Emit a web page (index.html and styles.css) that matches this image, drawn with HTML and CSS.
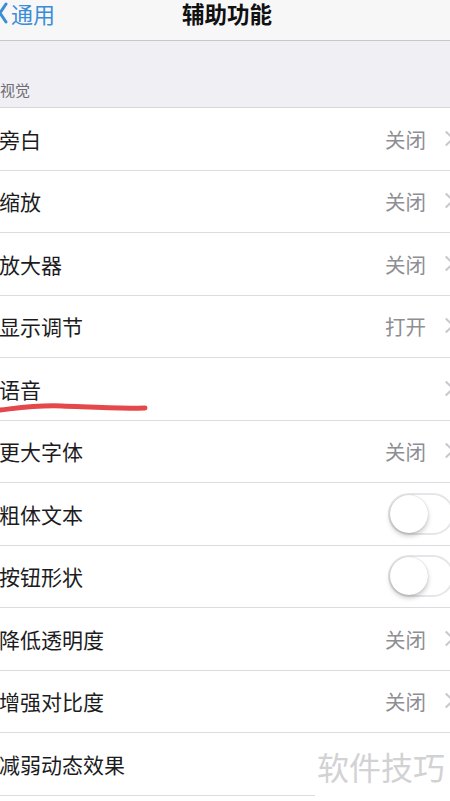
FILE: index.html
```html
<!DOCTYPE html>
<html lang="zh-CN">
<head>
    <meta charset="UTF-8">
    <meta name="viewport" content="width=device-width, initial-scale=1.0">
    <title>辅助功能</title>
    <link rel="stylesheet" href="styles.css">
</head>
<body>
    <div class="screen">
        <header class="nav">
            <span class="back">
                <svg class="back-icon" width="9" height="22" viewBox="0 0 9 22">
                    <path d="M7 2 L1 11 L7 20" fill="none" stroke="#3b8ed6" stroke-width="3" stroke-linecap="round" stroke-linejoin="round"/>
                </svg>
                通用
            </span>
            <h1>辅助功能</h1>
        </header>

        <div class="section-title">视觉</div>

        <ul class="list">
            <li class="row"><span class="label">旁白</span><span class="value">关闭</span><span class="chev"></span></li>
            <li class="row"><span class="label">缩放</span><span class="value">关闭</span><span class="chev"></span></li>
            <li class="row"><span class="label">放大器</span><span class="value">关闭</span><span class="chev"></span></li>
            <li class="row"><span class="label">显示调节</span><span class="value">打开</span><span class="chev"></span></li>
            <li class="row"><span class="label">语音</span><span class="chev"></span></li>
            <li class="row"><span class="label">更大字体</span><span class="value">关闭</span><span class="chev"></span></li>
            <li class="row"><span class="label">粗体文本</span><span class="toggle"><span class="knob"></span></span></li>
            <li class="row"><span class="label">按钮形状</span><span class="toggle"><span class="knob"></span></span></li>
            <li class="row"><span class="label">降低透明度</span><span class="value">关闭</span><span class="chev"></span></li>
            <li class="row"><span class="label">增强对比度</span><span class="value">关闭</span><span class="chev"></span></li>
            <li class="row"><span class="label">减弱动态效果</span></li>
        </ul>

        <!-- hand drawn mark under 语音 -->
        <svg class="scribble" width="150" height="14" viewBox="0 0 150 14">
            <path d="M0 9 C18 7 35 4 62 5 S115 8 145 7" fill="none" stroke="#e5484b" stroke-width="5" stroke-linecap="round"/>
        </svg>

        <div class="watermark">软件技巧</div>
    </div>
</body>
</html>
```

FILE: styles.css
```css
html,
body {
    margin: 0;
    padding: 0;
    overflow: hidden;
    background-color: #fff;
}

body {
    font-family: "Noto Sans CJK SC", "Noto Sans", sans-serif;
    color: #1c1c1e;
}

.screen {
    position: relative;
    width: 454px;
    height: 801px;
    margin-left: -1px;
    overflow: hidden;
}

.nav {
    height: 40px;
    border-bottom: 1px solid #c8c8cc;
    background-color: #f7f7f8;
    position: relative;
    display: flex;
    justify-content: center;
}

.back {
    position: absolute;
    left: 0;
    top: 0;
    display: flex;
    align-items: center;
    gap: 3px;
    height: 26px;
    line-height: 26px;
    font-size: 22px;
    color: #3b8ed6;
}

.back-icon {
    display: block;
}

.nav h1 {
    margin: 0;
    font-size: 22.5px;
    font-weight: 700;
    line-height: 26px;
    color: #111;
    padding-left: 2px;
}

.section-title {
    background-color: #efeff4;
    border-bottom: 1px solid #d8d8dc;
    box-sizing: border-box;
    height: 67px;
    padding-top: 38px;
    padding-left: 1px;
    font-size: 15px;
    color: #6d6d72;
}

.list {
    list-style: none;
    margin: 0;
    padding: 0;
}

.row {
    height: 61.5px;
    border-bottom: 1px solid #dcdcdf;
    display: flex;
    align-items: center;
    font-size: 21px;
}

.label {
    flex: 1;
    color: #1c1c1e;
}

.value {
    color: #8e8e93;
    font-size: 20.5px;
    margin-right: 15px;
}

.chev {
    width: 12px;
    height: 16px;
    position: relative;
}

.chev::before {
    content: "";
    position: absolute;
    left: 0;
    top: 2px;
    width: 9px;
    height: 9px;
    border-top: 2px solid #c7c7cc;
    border-right: 2px solid #c7c7cc;
    transform: rotate(45deg);
}

.toggle {
    width: 62px;
    height: 38px;
    border: 2px solid #e6e6ea;
    border-radius: 21px;
    background-color: #fff;
    position: relative;
    margin-right: -1px;
}

.knob {
    position: absolute;
    left: 0;
    top: 0;
    width: 38px;
    height: 38px;
    border-radius: 50%;
    background-color: #fff;
    box-shadow: 0 3px 5px rgba(0, 0, 0, 0.22), 0 0 1px rgba(0, 0, 0, 0.25);
}

.scribble {
    position: absolute;
    left: 1px;
    top: 401px;
}

.watermark {
    position: absolute;
    left: 316px;
    top: 734px;
    width: 140px;
    height: 64px;
    background-color: #fff;
    box-sizing: border-box;
    padding-left: 2px;
    font-size: 32px;
    line-height: 64px;
    color: #d2d2d4;
}
```
